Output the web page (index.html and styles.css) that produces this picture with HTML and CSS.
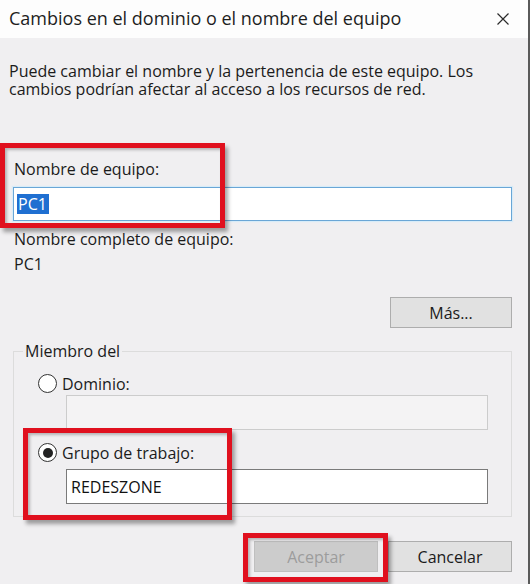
FILE: index.html
```html
<!DOCTYPE html>
<html lang="es">
<head>
<meta charset="utf-8">
<title>Cambios en el dominio o el nombre del equipo</title>
<link rel="stylesheet" href="styles.css">
</head>
<body>
<div class="window">
  <div class="titlebar">
    <span class="title">Cambios en el dominio o el nombre del equipo</span>
    <svg class="close" width="14" height="14" viewBox="0 0 14 14"><path d="M1.5 1.5 L12.5 12.5 M12.5 1.5 L1.5 12.5" stroke="#2b2b2b" stroke-width="1.2" fill="none"/></svg>
  </div>
  <div class="content">
    <p class="intro">Puede cambiar el nombre y la pertenencia de este equipo. Los cambios podrían afectar al acceso a los recursos de red.</p>
    <div class="label name-label">Nombre de equipo:</div>
    <div class="textbox focused"><span class="sel">PC1</span></div>
    <div class="label full-label">Nombre completo de equipo:</div>
    <div class="label full-value">PC1</div>
    <div class="more-row"><button class="btn more">Más...</button></div>
    <fieldset class="group">
      <legend>Miembro del</legend>
      <div class="radio-row"><span class="radio"></span><span class="label">Dominio:</span></div>
      <div class="textbox disabled inner"></div>
      <div class="radio-row second"><span class="radio checked"></span><span class="label">Grupo de trabajo:</span></div>
      <div class="textbox inner white">REDESZONE</div>
    </fieldset>
    <div class="actions">
      <button class="btn ok" disabled>Aceptar</button>
      <button class="btn cancel">Cancelar</button>
    </div>
    <div class="mark mark1"></div>
    <div class="mark mark2"></div>
    <div class="mark mark3"></div>
  </div>
</div>
</body>
</html>
```
FILE: styles.css
```css
* { box-sizing: border-box; }
html, body { margin: 0; padding: 0; }
body {
  width: 530px;
  height: 584px;
  overflow: hidden;
  font-family: "Open Sans", "Liberation Sans", Arial, sans-serif;
  color: #1b1b1b;
  background: #f0eff1;
}
.window {
  width: 530px;
  height: 584px;
  border-right: 2px solid #5a5a5a;
  background: #f0eff1;
}
.titlebar {
  height: 38px;
  background: #fdfdfd;
  display: flex;
  align-items: center;
  justify-content: space-between;
  padding: 0 18px 2px 9px;
}
.title {
  font-size: 18px;
  line-height: 20px;
  color: #1e1e1e;
}
.close { display: block; margin-top: 2px; }
.content {
  position: relative;
  padding: 24px 16px 0 13px;
  height: 546px;
}
.intro {
  margin: 0 0 0 -4px;
  font-size: 16px;
  line-height: 18px;
  width: 500px;
}
.label {
  font-size: 16px;
  line-height: 18px;
}
.name-label { margin-top: 62px; margin-left: 1px; }
.textbox {
  height: 34px;
  border: 1px solid #7a7a7a;
  background: #fff;
  font-size: 16px;
  display: flex;
  align-items: center;
  padding-left: 3px;
}
.textbox.focused {
  margin-top: 9px;
  border-color: #6aa6d6;
  box-shadow: 0 0 1px 1px #d8ecf8;
}
.sel {
  background: #1f6fd1;
  color: #fff;
  padding: 1px 2px 1px 1px;
  line-height: 18px;
}
.full-label { margin-top: 9px; margin-left: 1px; }
.full-value { margin-top: 7px; margin-left: 1px; }
.more-row {
  display: flex;
  justify-content: flex-end;
  margin-top: 24px;
}
.btn {
  font-family: "Open Sans", "Liberation Sans", Arial, sans-serif;
  font-size: 16px;
  color: #1b1b1b;
  height: 31px;
  background: #e1e1e1;
  border: 1px solid #adadad;
  padding: 0;
}
.more { width: 122px; }
.group {
  margin: 14px 0 0 0;
  border: 1px solid #dcdcdc;
  padding: 0 23px 12px 9px;
  min-width: 0;
}
.group legend {
  font-size: 16px;
  line-height: 18px;
  padding: 0 2px;
}
.radio-row {
  display: flex;
  align-items: center;
  gap: 5px;
  margin: 14px 0 0 15px;
}
.radio-row.second { margin-top: 13px; }
.radio {
  width: 19px;
  height: 19px;
  border: 1.5px solid #333;
  border-radius: 50%;
  background: #fff;
  display: flex;
  align-items: center;
  justify-content: center;
  flex: none;
}
.radio.checked::after {
  content: "";
  width: 10px;
  height: 10px;
  border-radius: 50%;
  background: #222;
}
.textbox.inner {
  margin-left: 43px;
  height: 35px;
}
.textbox.disabled {
  background: #f4f3f4;
  border-color: #cccccc;
  margin-top: 2px;
}
.textbox.white {
  margin-top: 7px;
  padding-left: 4px;
  color: #111;
}
.actions {
  display: flex;
  justify-content: flex-end;
  gap: 10px;
  margin-top: 24px;
}
.ok {
  width: 124px;
  background: #cccccc;
  border-color: #bfbfbf;
  color: #9c9c9c;
}
.cancel { width: 124px; }
.mark {
  position: absolute;
  border: 5px solid #e0101e;
  box-shadow: 3px 4px 4px rgba(0,0,0,0.35), inset 2px 2px 3px rgba(0,0,0,0.25);
}
.mark1 { left: 0; top: 105px; width: 225px; height: 85px; }
.mark2 { left: 23px; top: 390px; width: 209px; height: 92px; }
.mark3 { left: 243px; top: 495px; width: 145px; height: 49px; }
```
